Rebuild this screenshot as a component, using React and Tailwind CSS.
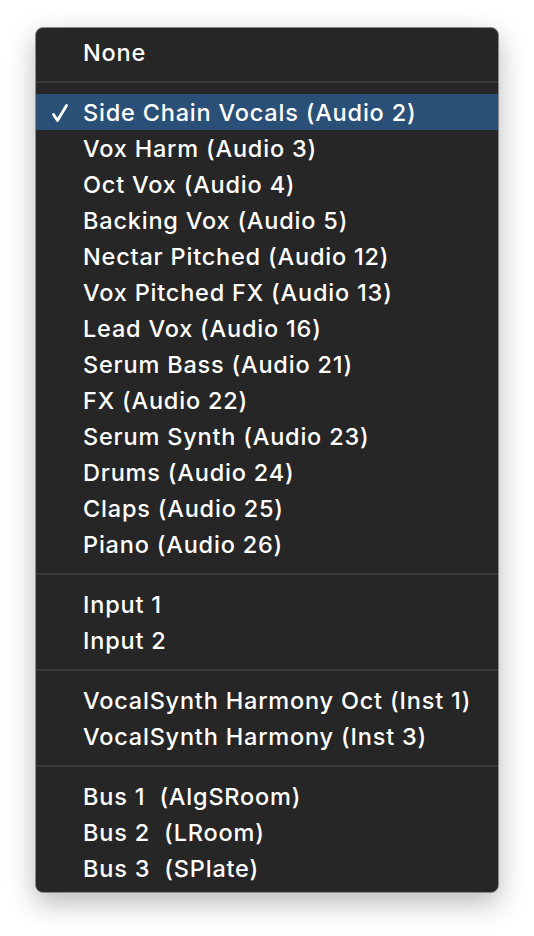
import React from "react";

const groups = [
  ["None"],
  [
    "Side Chain Vocals (Audio 2)",
    "Vox Harm (Audio 3)",
    "Oct Vox (Audio 4)",
    "Backing Vox (Audio 5)",
    "Nectar Pitched (Audio 12)",
    "Vox Pitched FX (Audio 13)",
    "Lead Vox (Audio 16)",
    "Serum Bass (Audio 21)",
    "FX (Audio 22)",
    "Serum Synth (Audio 23)",
    "Drums (Audio 24)",
    "Claps (Audio 25)",
    "Piano (Audio 26)",
  ],
  ["Input 1", "Input 2"],
  ["VocalSynth Harmony Oct (Inst 1)", "VocalSynth Harmony (Inst 3)"],
  ["Bus 1\u00a0 (AlgSRoom)", "Bus 2\u00a0 (LRoom)", "Bus 3\u00a0 (SPlate)"],
];

export default function App() {
  return (
    <div className="w-[534px] h-[936px] bg-white pt-[27px] pl-[35px]">
      <div
        className="w-[464px] h-[866px] rounded-[8px] border border-[#8c8c8c] bg-[#262626] pt-[6px] pb-[5px] shadow-[0_10px_28px_rgba(0,0,0,0.28)] text-white overflow-hidden"
        style={{ fontFamily: "Inter, 'Liberation Sans', sans-serif" }}
      >
        {groups.map((g, gi) => (
          <div key={gi}>
            {gi > 0 && (
              <div className="h-[24px] flex items-center">
                <div className="h-[2px] w-full bg-[#3a3a3a]" />
              </div>
            )}
            {g.map((item) => {
              const sel = item.startsWith("Side Chain");
              return (
                <div
                  key={item}
                  className={`h-[36px] pt-[2px] flex items-center text-[23.5px] font-medium tracking-[0.8px] whitespace-pre ${sel ? "bg-[#2a5077]" : ""}`}
                >
                  <div className="w-[47px] flex justify-end pr-[14px]">
                    {sel && (
                      <svg width="18" height="20" viewBox="0 0 18 20">
                        <path d="M2.5 11.5 L6.5 17.5 L15.5 2.5" fill="none" stroke="white" strokeWidth="2.8" strokeLinecap="round" strokeLinejoin="round" />
                      </svg>
                    )}
                  </div>
                  <span>{item}</span>
                </div>
              );
            })}
          </div>
        ))}
      </div>
    </div>
  );
}
